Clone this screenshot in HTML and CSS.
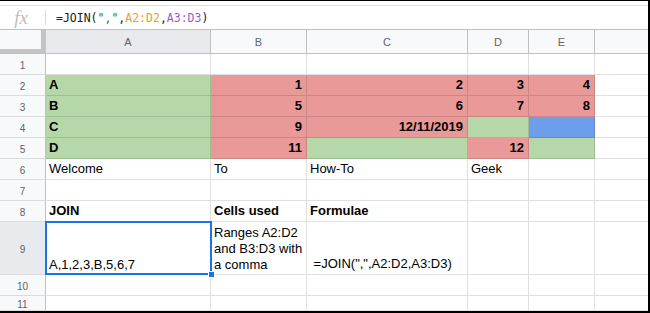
FILE: index.html
```html
<!DOCTYPE html>
<html lang="en">
<head>
  <meta charset="UTF-8" />
  <title>JOIN - Sheets</title>
  <link rel="stylesheet" href="styles.css">
</head>
<body>
  <div class="frame">
    <div class="toolbar"></div>

    <div class="formula-bar">
      <div class="fx">fx</div>
      <div class="divider"></div>
      <div class="formula">=JOIN(<span class="str">","</span>,<span class="rng1">A2:D2</span>,<span class="rng2">A3:D3</span>)</div>
    </div>

    <div class="sheet">
      <!-- column headers -->
      <div class="corner"></div>
      <div class="col-head sel">A</div>
      <div class="col-head">B</div>
      <div class="col-head">C</div>
      <div class="col-head">D</div>
      <div class="col-head">E</div>
      <div class="col-head last"></div>

      <!-- row 1 -->
      <div class="row-head">1</div>
      <div class="cell"></div>
      <div class="cell"></div>
      <div class="cell"></div>
      <div class="cell"></div>
      <div class="cell"></div>
      <div class="cell last"></div>

      <!-- row 2 -->
      <div class="row-head">2</div>
      <div class="cell green bold">A</div>
      <div class="cell red bold num">1</div>
      <div class="cell red bold num">2</div>
      <div class="cell red bold num">3</div>
      <div class="cell red bold num">4</div>
      <div class="cell last"></div>

      <!-- row 3 -->
      <div class="row-head">3</div>
      <div class="cell green bold">B</div>
      <div class="cell red bold num">5</div>
      <div class="cell red bold num">6</div>
      <div class="cell red bold num">7</div>
      <div class="cell red bold num">8</div>
      <div class="cell last"></div>

      <!-- row 4 -->
      <div class="row-head">4</div>
      <div class="cell green bold">C</div>
      <div class="cell red bold num">9</div>
      <div class="cell red bold num">12/11/2019</div>
      <div class="cell green"></div>
      <div class="cell blue"></div>
      <div class="cell last"></div>

      <!-- row 5 -->
      <div class="row-head">5</div>
      <div class="cell green bold">D</div>
      <div class="cell red bold num">11</div>
      <div class="cell green"></div>
      <div class="cell red bold num">12</div>
      <div class="cell green"></div>
      <div class="cell last"></div>

      <!-- row 6 -->
      <div class="row-head">6</div>
      <div class="cell">Welcome</div>
      <div class="cell">To</div>
      <div class="cell">How-To</div>
      <div class="cell">Geek</div>
      <div class="cell"></div>
      <div class="cell last"></div>

      <!-- row 7 -->
      <div class="row-head">7</div>
      <div class="cell"></div>
      <div class="cell"></div>
      <div class="cell"></div>
      <div class="cell"></div>
      <div class="cell"></div>
      <div class="cell last"></div>

      <!-- row 8 -->
      <div class="row-head">8</div>
      <div class="cell bold">JOIN</div>
      <div class="cell bold">Cells used</div>
      <div class="cell bold">Formulae</div>
      <div class="cell"></div>
      <div class="cell"></div>
      <div class="cell last"></div>

      <!-- row 9 -->
      <div class="row-head sel">9</div>
      <div class="cell active">A,1,2,3,B,5,6,7<div class="selection"><span class="handle"></span></div></div>
      <div class="cell wrap">Ranges A2:D2<br>and B3:D3 with<br>a comma</div>
      <div class="cell">&nbsp;=JOIN(",",A2:D2,A3:D3)</div>
      <div class="cell"></div>
      <div class="cell"></div>
      <div class="cell last"></div>

      <!-- row 10 -->
      <div class="row-head">10</div>
      <div class="cell"></div>
      <div class="cell"></div>
      <div class="cell"></div>
      <div class="cell"></div>
      <div class="cell"></div>
      <div class="cell last"></div>

      <!-- row 11 -->
      <div class="row-head">11</div>
      <div class="cell"></div>
      <div class="cell"></div>
      <div class="cell"></div>
      <div class="cell"></div>
      <div class="cell"></div>
      <div class="cell last"></div>
    </div>
  </div>
</body>
</html>
```

FILE: styles.css
```css
* {
  box-sizing: border-box;
  margin: 0;
  padding: 0;
}

body {
  background: #fff;
  font-family: 'Liberation Sans', Arial, sans-serif;
}

.frame {
  width: 650px;
  height: 313px;
  border-top: 1px solid #000;
  border-right: 2px solid #000;
  border-bottom: 2px solid #000;
  display: flex;
  flex-direction: column;
  overflow: hidden;
}

.toolbar {
  height: 5px;
  border-bottom: 1px solid #e0e0e0;
}

.formula-bar {
  height: 24px;
  border-bottom: 1px solid #c0c0c0;
  display: flex;
  align-items: center;
}

.fx {
  width: 45px;
  text-align: center;
  font-family: 'Liberation Serif', serif;
  font-style: italic;
  font-size: 19px;
  color: #bdbdbd;
  padding-right: 3px;
  line-height: 20px;
}

.divider {
  width: 1px;
  height: 15px;
  background: #dadce0;
}

.formula {
  margin-left: 10px;
  font-family: 'DejaVu Sans Mono', monospace;
  font-size: 11.5px;
  color: #202124;
  padding-top: 1px;
}

.str { color: #188038; }
.rng1 { color: #f29b1d; }
.rng2 { color: #9a5bc8; }

.sheet {
  flex: 1;
  display: grid;
  grid-template-columns: 46px 165px 96px 161px 61px 66px 1fr;
  grid-template-rows: 24px repeat(8, 21px) 53px 21px 1fr;
}

.corner {
  background: #f8f9fa;
  border-right: 5px solid #c4c4c4;
  border-bottom: 5px solid #c4c4c4;
}

.col-head {
  background: #f8f9fa;
  border-right: 1px solid #c0c0c0;
  border-bottom: 1px solid #c0c0c0;
  display: flex;
  align-items: center;
  justify-content: center;
  font-size: 11px;
  color: #5f6368;
  padding-top: 1px;
}

.row-head {
  background: #f8f9fa;
  border-right: 1px solid #c0c0c0;
  border-bottom: 1px solid #dcdcdc;
  display: flex;
  align-items: center;
  justify-content: center;
  font-size: 10px;
  color: #5f6368;
  padding-top: 2px;
}

.sel {
  background: #e8eaed;
}

.cell {
  border-right: 1px solid rgba(0, 0, 0, 0.12);
  border-bottom: 1px solid rgba(0, 0, 0, 0.12);
  display: flex;
  align-items: flex-end;
  padding: 0 4px 2px 3px;
  font-size: 13px;
  line-height: 16px;
  color: #000;
  white-space: nowrap;
}

.last {
  border-right: none;
}

.bold { font-weight: bold; }
.num { justify-content: flex-end; }

.green { background: #b6d7a8; }
.red { background: #ea9999; }
.blue { background: #6d9eeb; }

.wrap {
  padding-bottom: 1px;
}

.active {
  position: relative;
  padding-bottom: 1px;
}

.selection {
  position: absolute;
  top: -1px;
  left: -1px;
  right: -2px;
  bottom: -1px;
  border: 2px solid #1a73e8;
}

.handle {
  position: absolute;
  right: -5px;
  bottom: -5px;
  width: 7px;
  height: 7px;
  background: #1a73e8;
  border: 1px solid #fff;
}
```
